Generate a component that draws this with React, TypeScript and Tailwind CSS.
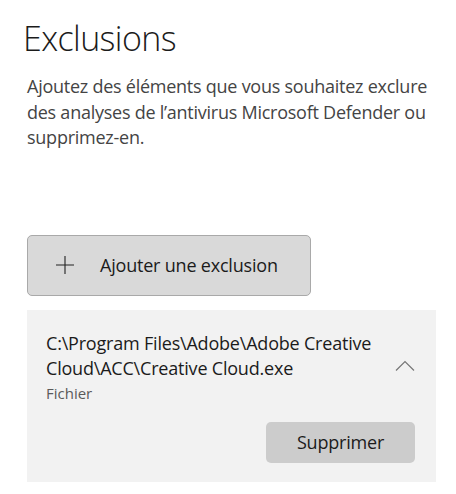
const font = { fontFamily: '"Open Sans", "Noto Sans", sans-serif' };

export default function App() {
  return (
    <div className="w-[456px] h-[494px] bg-white overflow-hidden text-[#1b1b1b]" style={font}>
      <div className="pl-[23px] pt-[14px]">
        <h1 className="text-[34px] font-light leading-[48px] tracking-[-0.6px]">Exclusions</h1>
      </div>
      <p className="ml-[27px] mt-[12px] text-[18px] leading-[25.5px] text-[#444] tracking-[-0.25px]">
        <span className="block whitespace-nowrap">Ajoutez des éléments que vous souhaitez exclure</span>
        <span className="block whitespace-nowrap">des analyses de l’antivirus Microsoft Defender ou</span>
        <span className="block whitespace-nowrap">supprimez-en.</span>
      </p>

      <button className="ml-[27px] mt-[84px] w-[284px] h-[61px] flex items-center rounded-[5px] border border-[#a9a9a9] bg-[#d9d9d9]">
        <svg className="ml-[27px]" width="20" height="20" viewBox="0 0 20 20">
          <path d="M10 1 V19 M1 10 H19" fill="none" stroke="#222" strokeWidth="1.1" />
        </svg>
        <span className="ml-[25px] text-[18px] text-[#1b1b1b] tracking-[-0.2px]">Ajouter une exclusion</span>
      </button>

      <div className="ml-[27px] mt-[14px] w-[409px] h-[172px] bg-[#f2f2f2] flex flex-col">
        <div className="flex items-start">
          <div className="pl-[19px] pt-[21px] flex-1">
            <div className="text-[18px] leading-[25px] text-[#1b1b1b] tracking-[-0.2px]">
              <span className="block whitespace-nowrap">C:\Program Files\Adobe\Adobe Creative</span>
              <span className="block whitespace-nowrap">Cloud\ACC\Creative Cloud.exe</span>
            </div>
            <div className="text-[15px] leading-[20px] text-[#5a5a5a] mt-[2px]">Fichier</div>
          </div>
          <svg className="mt-[50px] mr-[21px]" width="20" height="12" viewBox="0 0 20 12">
            <path d="M1 10.5 L10 1.5 L19 10.5" fill="none" stroke="#777" strokeWidth="1.2" />
          </svg>
        </div>
        <div className="flex justify-end pr-[21px] mt-[19px]">
          <button className="w-[149px] h-[41px] rounded-[5px] bg-[#cccccc] text-[18px] text-[#1b1b1b] tracking-[-0.2px]">
            Supprimer
          </button>
        </div>
      </div>
    </div>
  );
}
